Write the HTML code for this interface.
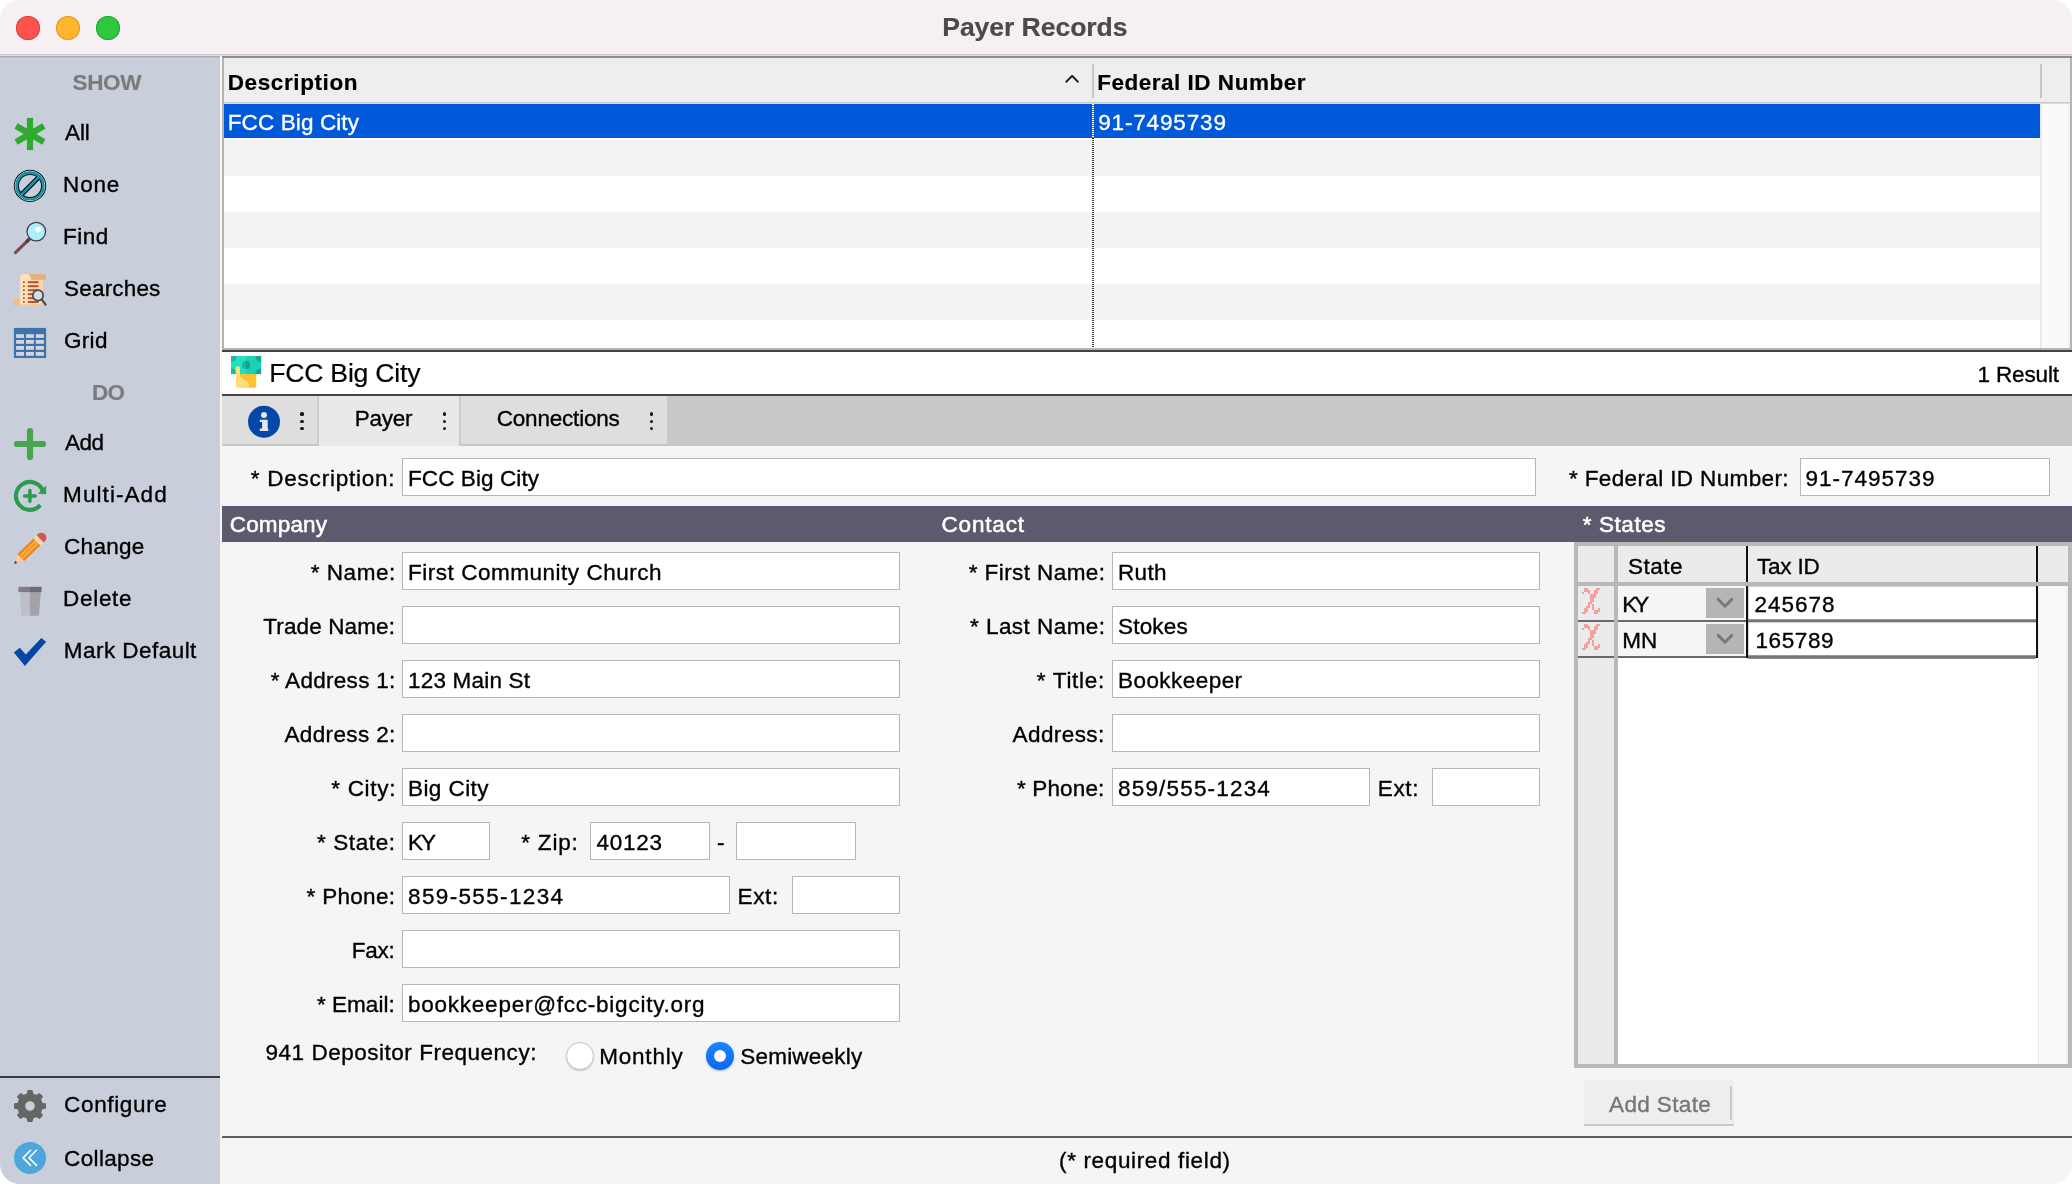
<!DOCTYPE html>
<html><head><meta charset="utf-8"><title>Payer Records</title><style>
html,body{margin:0;padding:0}
body{width:2072px;height:1184px;position:relative;overflow:hidden;background:#fff;font-family:"Liberation Sans",sans-serif}
.t{position:absolute;line-height:1;white-space:pre;font-family:"Liberation Sans",sans-serif}
#txt{position:absolute;left:0;top:0;width:2072px;height:1184px;will-change:transform}
.a{position:absolute}
</style></head><body>
<div class="a" id="win" style="left:0;top:0;width:2072px;height:1184px;border-radius:20px;overflow:hidden;background:#f5f5f5">
<div class="a" style="left:0px;top:0px;width:2072px;height:54px;background:#f6f0f5"></div>
<div class="a" style="left:0px;top:54px;width:2072px;height:1px;background:#cfc9ce"></div>
<div class="a" style="left:0px;top:55px;width:2072px;height:1px;background:#e6e0e5"></div>
<div class="a" style="left:16px;top:16px;width:24px;height:24px;border-radius:50%;background:#fe5450;box-shadow:inset 0 0 0 1px #e33e3a"></div>
<div class="a" style="left:56px;top:16px;width:24px;height:24px;border-radius:50%;background:#feb530;box-shadow:inset 0 0 0 1px #e09e22"></div>
<div class="a" style="left:96px;top:16px;width:24px;height:24px;border-radius:50%;background:#2fc640;box-shadow:inset 0 0 0 1px #1eaa2e"></div>
<div class="a" style="left:0px;top:56px;width:220px;height:1128px;background:#c9cfda"></div>
<div class="a" style="left:0px;top:56px;width:220px;height:1px;background:#a3abb7"></div>
<div class="a" style="left:0px;top:57px;width:220px;height:1px;background:#bcc3ce"></div>
<div class="a" style="left:220px;top:56px;width:2px;height:1128px;background:#f7f7f7"></div>
<div class="a" style="left:0px;top:1076px;width:220px;height:2px;background:#3b3b3b"></div>
<div class="a" style="left:222px;top:56px;width:1850px;height:294px;background:#b4b4b4"></div>
<div class="a" style="left:222px;top:56px;width:1850px;height:2px;background:#8e8e8e"></div>
<div class="a" style="left:224px;top:58px;width:1846px;height:44px;background:#eeeeee"></div>
<div class="a" style="left:224px;top:102px;width:1846px;height:1px;background:#c9c9c9"></div>
<div class="a" style="left:224px;top:103px;width:1846px;height:1px;background:#dcdcdc"></div>
<div class="a" style="left:224px;top:104px;width:1816px;height:244px;background:#fff"></div>
<div class="a" style="left:224px;top:140px;width:1816px;height:36px;background:#f1f2f2"></div>
<div class="a" style="left:224px;top:212px;width:1816px;height:36px;background:#f1f2f2"></div>
<div class="a" style="left:224px;top:284px;width:1816px;height:36px;background:#f1f2f2"></div>
<div class="a" style="left:224px;top:104px;width:1816px;height:34px;background:#0059d8"></div>
<div class="a" style="left:2040px;top:104px;width:30px;height:244px;background:#fafafa;box-shadow:inset 1.5px 0 0 #e6e6e6,inset -2px 0 0 #f1f1f1"></div>
<div class="a" style="left:1092px;top:64px;width:2px;height:34px;background:#c8c8c8"></div>
<div class="a" style="left:2040px;top:64px;width:2px;height:34px;background:#c8c8c8"></div>
<div class="a" style="left:1092.3px;top:104px;width:1.6px;height:244px;background:repeating-linear-gradient(to bottom,#3c3c3c 0,#3c3c3c 1px,transparent 1px,transparent 2px)"></div>
<div class="a" style="left:1092.3px;top:104px;width:1.6px;height:34px;background:repeating-linear-gradient(to bottom,#fff 0,#fff 1px,#7a6240 1px,#7a6240 2px)"></div>
<svg class="a" style="left:1062px;top:72px" width="20" height="16" viewBox="0 0 20 16"><path d="M4.4 9.7 L10.1 3.9 L15.8 9.7" fill="none" stroke="#111" stroke-width="1.9" stroke-linecap="round" stroke-linejoin="round"/></svg>
<div class="a" style="left:222px;top:350px;width:1850px;height:2px;background:#444"></div>
<div class="a" style="left:222px;top:352px;width:1850px;height:42px;background:#fff"></div>
<div class="a" style="left:222px;top:394px;width:1850px;height:2px;background:#444"></div>
<div class="a" style="left:222px;top:396px;width:1850px;height:50px;background:#c8c8c8"></div>
<div class="a" style="left:222px;top:396px;width:96.7px;height:50px;background:#dedede;box-shadow:inset -1.5px -2px 0 #c6c6c6"></div>
<div class="a" style="left:318.7px;top:396px;width:140.6px;height:50px;background:#e9e9e9"></div>
<div class="a" style="left:459.3px;top:396px;width:207.7px;height:50px;background:#dedede;box-shadow:inset 1.5px -2px 0 #c6c6c6;border-bottom-left-radius:3px"></div>
<div class="a" style="left:300.45px;top:412.45px;width:3.1px;height:3.1px;border-radius:50%;background:#161616"></div>
<div class="a" style="left:300.45px;top:419.95px;width:3.1px;height:3.1px;border-radius:50%;background:#161616"></div>
<div class="a" style="left:300.45px;top:427.25px;width:3.1px;height:3.1px;border-radius:50%;background:#161616"></div>
<div class="a" style="left:442.95px;top:412.45px;width:3.1px;height:3.1px;border-radius:50%;background:#161616"></div>
<div class="a" style="left:442.95px;top:419.95px;width:3.1px;height:3.1px;border-radius:50%;background:#161616"></div>
<div class="a" style="left:442.95px;top:427.25px;width:3.1px;height:3.1px;border-radius:50%;background:#161616"></div>
<div class="a" style="left:649.95px;top:412.45px;width:3.1px;height:3.1px;border-radius:50%;background:#161616"></div>
<div class="a" style="left:649.95px;top:419.95px;width:3.1px;height:3.1px;border-radius:50%;background:#161616"></div>
<div class="a" style="left:649.95px;top:427.25px;width:3.1px;height:3.1px;border-radius:50%;background:#161616"></div>
<div class="a" style="left:222px;top:446px;width:1850px;height:690px;background:#f5f5f5"></div>
<div class="a" style="left:222px;top:506px;width:1850px;height:36px;background:#5c5b6e"></div>
<div class="a" style="left:222px;top:1136px;width:1850px;height:2px;background:#5e5e5e"></div>
<div class="a" style="left:402px;top:458px;width:1134px;height:38px;background:#fff;box-sizing:border-box;border:1.5px solid #b6b6b6"></div>
<div class="a" style="left:1800px;top:458px;width:250px;height:38px;background:#fff;box-sizing:border-box;border:1.5px solid #b6b6b6"></div>
<div class="a" style="left:402px;top:552px;width:498px;height:38px;background:#fff;box-sizing:border-box;border:1.5px solid #b6b6b6"></div>
<div class="a" style="left:402px;top:606px;width:498px;height:38px;background:#fff;box-sizing:border-box;border:1.5px solid #b6b6b6"></div>
<div class="a" style="left:402px;top:660px;width:498px;height:38px;background:#fff;box-sizing:border-box;border:1.5px solid #b6b6b6"></div>
<div class="a" style="left:402px;top:714px;width:498px;height:38px;background:#fff;box-sizing:border-box;border:1.5px solid #b6b6b6"></div>
<div class="a" style="left:402px;top:768px;width:498px;height:38px;background:#fff;box-sizing:border-box;border:1.5px solid #b6b6b6"></div>
<div class="a" style="left:402px;top:822px;width:88px;height:38px;background:#fff;box-sizing:border-box;border:1.5px solid #b6b6b6"></div>
<div class="a" style="left:590px;top:822px;width:120px;height:38px;background:#fff;box-sizing:border-box;border:1.5px solid #b6b6b6"></div>
<div class="a" style="left:736px;top:822px;width:120px;height:38px;background:#fff;box-sizing:border-box;border:1.5px solid #b6b6b6"></div>
<div class="a" style="left:402px;top:876px;width:328px;height:38px;background:#fff;box-sizing:border-box;border:1.5px solid #b6b6b6"></div>
<div class="a" style="left:792px;top:876px;width:108px;height:38px;background:#fff;box-sizing:border-box;border:1.5px solid #b6b6b6"></div>
<div class="a" style="left:402px;top:930px;width:498px;height:38px;background:#fff;box-sizing:border-box;border:1.5px solid #b6b6b6"></div>
<div class="a" style="left:402px;top:984px;width:498px;height:38px;background:#fff;box-sizing:border-box;border:1.5px solid #b6b6b6"></div>
<div class="a" style="left:1112px;top:552px;width:428px;height:38px;background:#fff;box-sizing:border-box;border:1.5px solid #b6b6b6"></div>
<div class="a" style="left:1112px;top:606px;width:428px;height:38px;background:#fff;box-sizing:border-box;border:1.5px solid #b6b6b6"></div>
<div class="a" style="left:1112px;top:660px;width:428px;height:38px;background:#fff;box-sizing:border-box;border:1.5px solid #b6b6b6"></div>
<div class="a" style="left:1112px;top:714px;width:428px;height:38px;background:#fff;box-sizing:border-box;border:1.5px solid #b6b6b6"></div>
<div class="a" style="left:1112px;top:768px;width:258px;height:38px;background:#fff;box-sizing:border-box;border:1.5px solid #b6b6b6"></div>
<div class="a" style="left:1432px;top:768px;width:108px;height:38px;background:#fff;box-sizing:border-box;border:1.5px solid #b6b6b6"></div>
<div class="a" style="left:566px;top:1042px;width:28px;height:28px;border-radius:50%;background:#fff;box-sizing:border-box;border:1px solid #c4c4c4;box-shadow:0 1px 1.5px rgba(0,0,0,.18)"></div>
<div class="a" style="left:706px;top:1042px;width:28px;height:28px;border-radius:50%;background:linear-gradient(#1a86ff,#0a68ee);box-shadow:0 1px 2px rgba(0,60,160,.35)"></div>
<div class="a" style="left:713.8px;top:1049.8px;width:12.4px;height:12.4px;border-radius:50%;background:#fff"></div>
<div class="a" style="left:1574px;top:542px;width:498px;height:526px;background:#b9b9b9"></div>
<div class="a" style="left:1578px;top:546px;width:36px;height:36px;background:#ebebeb"></div>
<div class="a" style="left:1618px;top:546px;width:128px;height:36px;background:#ebebeb"></div>
<div class="a" style="left:1748px;top:546px;width:288px;height:36px;background:#ebebeb"></div>
<div class="a" style="left:2038px;top:546px;width:30px;height:36px;background:#ebebeb"></div>
<div class="a" style="left:1746px;top:546px;width:2px;height:36px;background:#111"></div>
<div class="a" style="left:2036px;top:546px;width:2px;height:36px;background:#111"></div>
<div class="a" style="left:1578px;top:586px;width:36px;height:478px;background:#ebebeb"></div>
<div class="a" style="left:1618px;top:586px;width:420px;height:478px;background:#fff"></div>
<div class="a" style="left:2038px;top:586px;width:30px;height:478px;background:#f9f9f9;box-shadow:inset 1px 0 0 #ececec,inset -2px 0 0 #f0f0f0"></div>
<div class="a" style="left:1578px;top:620px;width:36px;height:2px;background:#6a6a6a"></div>
<div class="a" style="left:1618px;top:586px;width:128px;height:34px;background:#f5f5f5"></div>
<div class="a" style="left:1618px;top:620px;width:128px;height:2px;background:#6a6a6a"></div>
<div class="a" style="left:1706px;top:588px;width:38px;height:30px;background:#b5b5b5"></div>
<svg class="a" style="left:1715px;top:596px" width="20" height="14" viewBox="0 0 20 14"><path d="M3.2 3.4 L10 10.2 L16.8 3.4" fill="none" stroke="#797979" stroke-width="2.9" stroke-linecap="round" stroke-linejoin="round"/></svg>
<div class="a" style="left:1748px;top:586px;width:288px;height:34px;background:#fff;box-shadow:inset 2px 2px 1px -1px #cfcfcf"></div>
<div class="a" style="left:1748px;top:618.5px;width:288px;height:4px;background:linear-gradient(#a8a8a8,#6e6e6e 45%,#6e6e6e 60%,#9a9a9a)"></div>
<svg class="a" style="left:1582px;top:588px" width="18" height="26" viewBox="0 0 18 26" shape-rendering="crispEdges"><g fill="#f4a19b"><rect x="2" y="0" width="2" height="2"/><rect x="4" y="0" width="2" height="2"/><rect x="14" y="0" width="2" height="2"/><rect x="16" y="0" width="2" height="2"/><rect x="2" y="2" width="2" height="2"/><rect x="4" y="2" width="2" height="2"/><rect x="6" y="2" width="2" height="2"/><rect x="12" y="2" width="2" height="2"/><rect x="14" y="2" width="2" height="2"/><rect x="0" y="4" width="2" height="2"/><rect x="6" y="4" width="2" height="2"/><rect x="12" y="4" width="2" height="2"/><rect x="14" y="4" width="2" height="2"/><rect x="8" y="6" width="2" height="2"/><rect x="10" y="6" width="2" height="2"/><rect x="12" y="6" width="2" height="2"/><rect x="8" y="8" width="2" height="2"/><rect x="10" y="8" width="2" height="2"/><rect x="12" y="8" width="2" height="2"/><rect x="8" y="10" width="2" height="2"/><rect x="10" y="10" width="2" height="2"/><rect x="8" y="12" width="2" height="2"/><rect x="10" y="12" width="2" height="2"/><rect x="6" y="14" width="2" height="2"/><rect x="8" y="14" width="2" height="2"/><rect x="6" y="16" width="2" height="2"/><rect x="10" y="16" width="2" height="2"/><rect x="4" y="18" width="2" height="2"/><rect x="6" y="18" width="2" height="2"/><rect x="10" y="18" width="2" height="2"/><rect x="2" y="20" width="2" height="2"/><rect x="4" y="20" width="2" height="2"/><rect x="10" y="20" width="2" height="2"/><rect x="16" y="20" width="2" height="2"/><rect x="2" y="22" width="2" height="2"/><rect x="4" y="22" width="2" height="2"/><rect x="12" y="22" width="2" height="2"/><rect x="14" y="22" width="2" height="2"/><rect x="16" y="22" width="2" height="2"/><rect x="0" y="24" width="2" height="2"/><rect x="2" y="24" width="2" height="2"/><rect x="12" y="24" width="2" height="2"/><rect x="14" y="24" width="2" height="2"/></g></svg>
<div class="a" style="left:1578px;top:656px;width:36px;height:2px;background:#6a6a6a"></div>
<div class="a" style="left:1618px;top:622px;width:128px;height:34px;background:#f5f5f5"></div>
<div class="a" style="left:1618px;top:656px;width:128px;height:2px;background:#6a6a6a"></div>
<div class="a" style="left:1706px;top:624px;width:38px;height:30px;background:#b5b5b5"></div>
<svg class="a" style="left:1715px;top:632px" width="20" height="14" viewBox="0 0 20 14"><path d="M3.2 3.4 L10 10.2 L16.8 3.4" fill="none" stroke="#797979" stroke-width="2.9" stroke-linecap="round" stroke-linejoin="round"/></svg>
<div class="a" style="left:1748px;top:622px;width:288px;height:34px;background:#fff;box-shadow:inset 2px 2px 1px -1px #cfcfcf"></div>
<div class="a" style="left:1748px;top:654.5px;width:288px;height:4px;background:linear-gradient(#a8a8a8,#6e6e6e 45%,#6e6e6e 60%,#9a9a9a)"></div>
<svg class="a" style="left:1582px;top:624px" width="18" height="26" viewBox="0 0 18 26" shape-rendering="crispEdges"><g fill="#f4a19b"><rect x="2" y="0" width="2" height="2"/><rect x="4" y="0" width="2" height="2"/><rect x="14" y="0" width="2" height="2"/><rect x="16" y="0" width="2" height="2"/><rect x="2" y="2" width="2" height="2"/><rect x="4" y="2" width="2" height="2"/><rect x="6" y="2" width="2" height="2"/><rect x="12" y="2" width="2" height="2"/><rect x="14" y="2" width="2" height="2"/><rect x="0" y="4" width="2" height="2"/><rect x="6" y="4" width="2" height="2"/><rect x="12" y="4" width="2" height="2"/><rect x="14" y="4" width="2" height="2"/><rect x="8" y="6" width="2" height="2"/><rect x="10" y="6" width="2" height="2"/><rect x="12" y="6" width="2" height="2"/><rect x="8" y="8" width="2" height="2"/><rect x="10" y="8" width="2" height="2"/><rect x="12" y="8" width="2" height="2"/><rect x="8" y="10" width="2" height="2"/><rect x="10" y="10" width="2" height="2"/><rect x="8" y="12" width="2" height="2"/><rect x="10" y="12" width="2" height="2"/><rect x="6" y="14" width="2" height="2"/><rect x="8" y="14" width="2" height="2"/><rect x="6" y="16" width="2" height="2"/><rect x="10" y="16" width="2" height="2"/><rect x="4" y="18" width="2" height="2"/><rect x="6" y="18" width="2" height="2"/><rect x="10" y="18" width="2" height="2"/><rect x="2" y="20" width="2" height="2"/><rect x="4" y="20" width="2" height="2"/><rect x="10" y="20" width="2" height="2"/><rect x="16" y="20" width="2" height="2"/><rect x="2" y="22" width="2" height="2"/><rect x="4" y="22" width="2" height="2"/><rect x="12" y="22" width="2" height="2"/><rect x="14" y="22" width="2" height="2"/><rect x="16" y="22" width="2" height="2"/><rect x="0" y="24" width="2" height="2"/><rect x="2" y="24" width="2" height="2"/><rect x="12" y="24" width="2" height="2"/><rect x="14" y="24" width="2" height="2"/></g></svg>
<div class="a" style="left:1746px;top:586px;width:2px;height:72px;background:#111"></div>
<div class="a" style="left:2036px;top:586px;width:2px;height:72px;background:#111"></div>
<div class="a" style="left:1584px;top:1080px;width:150px;height:46px;background:#eeeeee;box-shadow:inset 0 -2px 0 #c9c9c9"></div>
<div class="a" style="left:1730px;top:1086px;width:2px;height:34px;background:#c9c9c9"></div>
</div>
<svg class="a" style="left:0;top:0" width="222" height="1184" viewBox="0 0 222 1184">
<g fill="#2eab2e" transform="translate(30 134)">
<rect x="-3.1" y="-16.1" width="6.2" height="32.2" transform="rotate(0)"/>
<rect x="-3.1" y="-16.1" width="6.2" height="32.2" transform="rotate(60)"/>
<rect x="-3.1" y="-16.1" width="6.2" height="32.2" transform="rotate(-60)"/>
</g>
<g fill="none" stroke-linecap="butt"><circle cx="30" cy="185.9" r="13.6" stroke="#07171c" stroke-width="5.2"/><line x1="21" y1="194.9" x2="39" y2="176.9" stroke="#07171c" stroke-width="4.9"/><circle cx="30" cy="185.9" r="14.85" stroke="#a5eef3" stroke-width="1"/><circle cx="30" cy="185.9" r="13.2" stroke="#1f8fa3" stroke-width="2.4"/><line x1="20.6" y1="195.3" x2="39.4" y2="176.5" stroke="#1f8fa3" stroke-width="2.5"/></g>
<g><line x1="28.8" y1="239.6" x2="15.4" y2="252.7" stroke="#7a4a47" stroke-width="3.1" stroke-linecap="round"/><line x1="29.6" y1="238.8" x2="26.2" y2="242.1" stroke="#5d3a40" stroke-width="3.4"/><circle cx="36.3" cy="231.6" r="9.3" fill="#a9f0fb" stroke="#4a3a56" stroke-width="1.3"/><circle cx="38.2" cy="229.6" r="2.9" fill="#ffffff"/></g>
<g><path d="M20.2 276.5 Q20.2 274 23 274 L43 274 L43 306 L14 306 L14 301 Q14 298.6 16.5 298.6 L20.2 298.6 Z" fill="#ffe0ba"/><rect x="31" y="274" width="12" height="32" fill="#fdd5a3"/><path d="M26 274 L43.5 274 Q46.1 274 46.1 276.8 L46.1 279.8 L31 279.8 Q31 274 26 274 Z" fill="#e3af7d"/><path d="M14 301 Q14 298.6 16.5 298.6 L20.2 298.6 L20.2 302 Q20.2 306 17 306 L14 306 Z" fill="#f1bd8c"/><rect x="14" y="304.2" width="29" height="1.8" fill="#f1bd8c" opacity="0.6"/>
<circle cx="23.9" cy="282.2" r="1" fill="#a5522f"/><line x1="27.8" y1="282.2" x2="38.5" y2="282.2" stroke="#a5522f" stroke-width="1.9"/>
<circle cx="23.9" cy="286.2" r="1" fill="#a5522f"/><line x1="27.8" y1="286.2" x2="38.5" y2="286.2" stroke="#a5522f" stroke-width="1.9"/>
<circle cx="23.9" cy="290.2" r="1" fill="#a5522f"/><line x1="27.8" y1="290.2" x2="38.5" y2="290.2" stroke="#a5522f" stroke-width="1.9"/>
<circle cx="23.9" cy="294.2" r="1" fill="#a5522f"/><line x1="27.8" y1="294.2" x2="38.5" y2="294.2" stroke="#a5522f" stroke-width="1.9"/>
<circle cx="23.9" cy="298.2" r="1" fill="#a5522f"/><line x1="27.8" y1="298.2" x2="38.5" y2="298.2" stroke="#a5522f" stroke-width="1.9"/>
<circle cx="23.9" cy="302" r="1" fill="#a5522f"/><line x1="27.8" y1="302" x2="38.5" y2="302" stroke="#a5522f" stroke-width="1.9"/>
<line x1="41.6" y1="299.3" x2="45.6" y2="304.6" stroke="#474b55" stroke-width="2.2" stroke-linecap="round"/><circle cx="38" cy="295.4" r="5.2" fill="#d6dcee" stroke="#474b55" stroke-width="1.7"/></g>
<g><rect x="13.9" y="327.9" width="32.2" height="30.1" fill="#3f72a8"/>
<rect x="16.1" y="334.2" width="7.9" height="3.7" fill="#d3d6de"/>
<rect x="16.1" y="340" width="7.9" height="3.8" fill="#d3d6de"/>
<rect x="16.1" y="346" width="7.9" height="3.8" fill="#d3d6de"/>
<rect x="16.1" y="352" width="7.9" height="3.8" fill="#d3d6de"/>
<rect x="26" y="334.2" width="7.9" height="3.7" fill="#d3d6de"/>
<rect x="26" y="340" width="7.9" height="3.8" fill="#d3d6de"/>
<rect x="26" y="346" width="7.9" height="3.8" fill="#d3d6de"/>
<rect x="26" y="352" width="7.9" height="3.8" fill="#d3d6de"/>
<rect x="35.8" y="334.2" width="8.1" height="3.7" fill="#d3d6de"/>
<rect x="35.8" y="340" width="8.1" height="3.8" fill="#d3d6de"/>
<rect x="35.8" y="346" width="8.1" height="3.8" fill="#d3d6de"/>
<rect x="35.8" y="352" width="8.1" height="3.8" fill="#d3d6de"/>
</g>
<g stroke="#47a54f" stroke-width="6.2" stroke-linecap="round"><line x1="17" y1="444" x2="43" y2="444"/><line x1="30" y1="431" x2="30" y2="457"/></g>
<g fill="none" stroke="#2a9b4f"><path d="M40.30 505.20 A13.95 13.95 0 1 1 42.83 490.67" stroke-width="4.1" stroke-linecap="butt"/><line x1="24.6" y1="495.9" x2="35.2" y2="495.9" stroke-width="3.5" stroke-linecap="round"/><line x1="29.9" y1="490.6" x2="29.9" y2="501.2" stroke-width="3.5" stroke-linecap="round"/></g>
<path d="M45.85 486 L45.9 493.9 L38.3 493.6 Z" fill="#2a9b4f" stroke="#2a9b4f" stroke-width="0.5" stroke-linejoin="round"/>
<g transform="translate(14 564) rotate(-43.8)"><path d="M0 0 L10 -4.9 L10 4.9 Z" fill="#f9caa2"/><path d="M0 0 L3.2 -1.55 L3.2 1.55 Z" fill="#3a3a3a"/><rect x="9.5" y="-4.9" width="22.7" height="9.8" fill="#ef8424"/><rect x="9.5" y="-2" width="22.7" height="4" fill="#f29a2e"/><rect x="10.5" y="-2.3" width="21.7" height="0.9" fill="#f7c548"/><rect x="10.5" y="1.4" width="21.7" height="0.9" fill="#f7c548"/><rect x="32" y="-5" width="4.2" height="10" fill="#f4ecc2"/><rect x="33.1" y="-5" width="0.7" height="10" fill="#e2d596"/><rect x="34.6" y="-5" width="0.7" height="10" fill="#e2d596"/><path d="M36.2 -5 L38 -5 A5 5 0 0 1 38 5 L36.2 5 Z" fill="#d9544b"/></g>
<g><rect x="25.6" y="584.2" width="9" height="3" rx="1" fill="#d2cfd2"/><path d="M20.2 592 L30 592 L30 615.8 L21.3 615.8 Z" fill="#bfbdc5"/><path d="M30 592 L40.8 592 L39 615.8 L30 615.8 Z" fill="#a3a1aa"/><rect x="18.4" y="586.8" width="11.6" height="5.3" fill="#7f7d8a"/><rect x="30" y="586.8" width="11.6" height="5.3" fill="#6e6c79"/></g>
<polygon points="13.9,652.4 19.8,647.8 25.8,654.5 41.3,637.9 46.1,641.7 24.9,666.1" fill="#0447a8"/>
<path d="M27.22 1094.02 L27.94 1090.64 L32.06 1090.64 L32.78 1094.02 L36.51 1095.56 L39.40 1093.68 L42.32 1096.60 L40.44 1099.49 L41.98 1103.22 L45.36 1103.94 L45.36 1108.06 L41.98 1108.78 L40.44 1112.51 L42.32 1115.40 L39.40 1118.32 L36.51 1116.44 L32.78 1117.98 L32.06 1121.36 L27.94 1121.36 L27.22 1117.98 L23.49 1116.44 L20.60 1118.32 L17.68 1115.40 L19.56 1112.51 L18.02 1108.78 L14.64 1108.06 L14.64 1103.94 L18.02 1103.22 L19.56 1099.49 L17.68 1096.60 L20.60 1093.68 L23.49 1095.56 Z M35.40 1106.00 A5.4 5.4 0 1 0 24.60 1106.00 A5.4 5.4 0 1 0 35.40 1106.00 Z" fill="#666666" fill-rule="evenodd" stroke="#666666" stroke-width="1.2" stroke-linejoin="round"/>
<circle cx="30" cy="1157.9" r="16" fill="#4da6dc"/><g fill="none" stroke="#ffffff" stroke-width="1.5" stroke-linecap="round" stroke-linejoin="round"><path d="M30.6 1150.3 L23.1 1157.9 L30.6 1165.4"/><path d="M36.5 1150.3 L29 1157.9 L36.5 1165.4"/></g>
</svg>
<svg class="a" style="left:222px;top:350px" width="120" height="96" viewBox="222 350 120 96">
<g><path d="M240 374 L256.3 374 L256.3 386 Q256.3 387.8 254.5 387.8 L240 387.8 Z" fill="#ffc12e"/><rect x="231" y="356.1" width="15" height="18" fill="#20e0c4"/><rect x="246" y="356.1" width="15.1" height="18" fill="#18d1b6"/><path d="M231 356.1 L236.8 356.1 A5.8 5.8 0 0 1 231 361.9 Z" fill="#1bb69d"/><path d="M261.1 356.1 L255.3 356.1 A5.8 5.8 0 0 0 261.1 361.9 Z" fill="#17a58e"/><path d="M231 374.1 L231 368.3 A5.8 5.8 0 0 1 236.8 374.1 Z" fill="#1bb69d"/><path d="M261.1 374.1 L261.1 368.3 A5.8 5.8 0 0 0 255.3 374.1 Z" fill="#17a58e"/><path d="M246 360.8 A4.1 4.1 0 0 0 246 369 Z" fill="#1bb69d"/><path d="M246 360.8 A4.1 4.1 0 0 1 246 369 Z" fill="#17a08a"/><path d="M235.6 368.6 Q235.6 366.3 237.8 366.3 Q240 366.3 240 368.6 L240 375 Q241 378.5 245 380 Q249 381.5 249 385 L249 387.8 L238 387.8 Q236.2 387.8 236.1 386 Z" fill="#ffde7a"/></g>
<circle cx="264" cy="421.75" r="16" fill="#0447a8"/><g fill="#e6e6e6"><circle cx="264" cy="415" r="3"/><path d="M259.8 419.8 L267.7 419.8 L267.7 428.6 L268.3 428.6 L268.3 431 L259.8 431 L259.8 428.6 L262.1 428.6 L262.1 421.9 L259.8 421.9 Z"/></g>
</svg>
<div id="txt">
<span id="title" class="t" style="left:942.25px;top:14.19px;font-size:26.6px;font-weight:700;letter-spacing:-0.083px;color:#4b4a4b;-webkit-text-stroke:0.2px #4b4a4b">Payer Records</span>
<span id="show" class="t" style="left:72.50px;top:71.78px;font-size:22.5px;font-weight:700;letter-spacing:-0.333px;color:#7b7b7b;-webkit-text-stroke:0.2px #7b7b7b">SHOW</span>
<span id="sb_All" class="t" style="left:65.10px;top:122.17px;font-size:22.5px;font-weight:400;letter-spacing:-0.200px;color:#000;-webkit-text-stroke:0.35px #000">All</span>
<span id="sb_None" class="t" style="left:63.10px;top:174.17px;font-size:22.5px;font-weight:400;letter-spacing:0.800px;color:#000;-webkit-text-stroke:0.35px #000">None</span>
<span id="sb_Find" class="t" style="left:63.10px;top:226.17px;font-size:22.5px;font-weight:400;letter-spacing:0.467px;color:#000;-webkit-text-stroke:0.35px #000">Find</span>
<span id="sb_Searches" class="t" style="left:64.10px;top:278.18px;font-size:22.5px;font-weight:400;letter-spacing:0.171px;color:#000;-webkit-text-stroke:0.35px #000">Searches</span>
<span id="sb_Grid" class="t" style="left:64.10px;top:330.18px;font-size:22.5px;font-weight:400;letter-spacing:0.267px;color:#000;-webkit-text-stroke:0.35px #000">Grid</span>
<span id="do" class="t" style="left:91.90px;top:381.77px;font-size:22.5px;font-weight:700;letter-spacing:-0.600px;color:#7b7b7b;-webkit-text-stroke:0.2px #7b7b7b">DO</span>
<span id="sb_Add" class="t" style="left:65.10px;top:432.18px;font-size:22.5px;font-weight:400;letter-spacing:-0.500px;color:#000;-webkit-text-stroke:0.35px #000">Add</span>
<span id="sb_Multi-Add" class="t" style="left:63.10px;top:484.18px;font-size:22.5px;font-weight:400;letter-spacing:1.075px;color:#000;-webkit-text-stroke:0.35px #000">Multi-Add</span>
<span id="sb_Change" class="t" style="left:64.10px;top:536.18px;font-size:22.5px;font-weight:400;letter-spacing:0.280px;color:#000;-webkit-text-stroke:0.35px #000">Change</span>
<span id="sb_Delete" class="t" style="left:63.10px;top:588.18px;font-size:22.5px;font-weight:400;letter-spacing:0.680px;color:#000;-webkit-text-stroke:0.35px #000">Delete</span>
<span id="sb_Mark_Default" class="t" style="left:63.80px;top:640.18px;font-size:22.5px;font-weight:400;letter-spacing:0.455px;color:#000;-webkit-text-stroke:0.35px #000">Mark Default</span>
<span id="sb_Configure" class="t" style="left:64.10px;top:1094.28px;font-size:22.5px;font-weight:400;letter-spacing:0.650px;color:#000;-webkit-text-stroke:0.35px #000">Configure</span>
<span id="sb_Collapse" class="t" style="left:64.10px;top:1147.98px;font-size:22.5px;font-weight:400;letter-spacing:0.343px;color:#000;-webkit-text-stroke:0.35px #000">Collapse</span>
<span id="th1" class="t" style="left:227.75px;top:71.78px;font-size:22.5px;font-weight:700;letter-spacing:0.600px;color:#000;-webkit-text-stroke:0.2px #000">Description</span>
<span id="th2" class="t" style="left:1097.20px;top:71.58px;font-size:22.5px;font-weight:700;letter-spacing:0.513px;color:#000;-webkit-text-stroke:0.2px #000">Federal ID Number</span>
<span id="td1" class="t" style="left:227.75px;top:111.58px;font-size:22.5px;font-weight:400;letter-spacing:0.109px;color:#fff;-webkit-text-stroke:0.35px #fff">FCC Big City</span>
<span id="td2" class="t" style="left:1098.20px;top:112.27px;font-size:22.5px;font-weight:400;letter-spacing:0.844px;color:#fff;-webkit-text-stroke:0.35px #fff">91-7495739</span>
<span id="rt" class="t" style="left:269.20px;top:359.94px;font-size:26.6px;font-weight:400;letter-spacing:-0.218px;color:#000;-webkit-text-stroke:0.2px #000">FCC Big City</span>
<span id="res" class="t" style="left:1977.50px;top:364.32px;font-size:22.5px;font-weight:400;letter-spacing:-0.143px;color:#000;-webkit-text-stroke:0.35px #000">1 Result</span>
<span id="tab1" class="t" style="left:354.75px;top:407.57px;font-size:22.5px;font-weight:400;letter-spacing:-0.250px;color:#000;-webkit-text-stroke:0.35px #000">Payer</span>
<span id="tab2" class="t" style="left:496.75px;top:407.57px;font-size:22.5px;font-weight:400;letter-spacing:-0.200px;color:#000;-webkit-text-stroke:0.35px #000">Connections</span>
<span id="l_desc" class="t" style="left:250.75px;top:467.57px;font-size:22.5px;font-weight:400;letter-spacing:0.769px;color:#000;-webkit-text-stroke:0.35px #000">* Description:</span>
<span id="v_desc" class="t" style="left:408.00px;top:467.57px;font-size:22.5px;font-weight:400;letter-spacing:0.091px;color:#000;-webkit-text-stroke:0.35px #000">FCC Big City</span>
<span id="l_fed" class="t" style="left:1569.00px;top:468.07px;font-size:22.5px;font-weight:400;letter-spacing:0.368px;color:#000;-webkit-text-stroke:0.35px #000">* Federal ID Number:</span>
<span id="v_fed" class="t" style="left:1805.50px;top:467.57px;font-size:22.5px;font-weight:400;letter-spacing:1.000px;color:#000;-webkit-text-stroke:0.35px #000">91-7495739</span>
<span id="h_co" class="t" style="left:229.75px;top:513.83px;font-size:22.5px;font-weight:400;letter-spacing:0.167px;color:#fff;-webkit-text-stroke:0.55px #fff">Company</span>
<span id="h_ct" class="t" style="left:941.50px;top:513.83px;font-size:22.5px;font-weight:400;letter-spacing:0.833px;color:#fff;-webkit-text-stroke:0.55px #fff">Contact</span>
<span id="h_st" class="t" style="left:1582.75px;top:513.68px;font-size:22.5px;font-weight:400;letter-spacing:0.571px;color:#fff;-webkit-text-stroke:0.55px #fff">* States</span>
<span id="l_name" class="t" style="left:310.75px;top:562.08px;font-size:22.5px;font-weight:400;letter-spacing:0.533px;color:#000;-webkit-text-stroke:0.35px #000">* Name:</span>
<span id="l_trade" class="t" style="left:263.25px;top:616.08px;font-size:22.5px;font-weight:400;letter-spacing:0.120px;color:#000;-webkit-text-stroke:0.35px #000">Trade Name:</span>
<span id="l_a1" class="t" style="left:270.75px;top:670.08px;font-size:22.5px;font-weight:400;letter-spacing:0.291px;color:#000;-webkit-text-stroke:0.35px #000">* Address 1:</span>
<span id="l_a2" class="t" style="left:284.50px;top:724.08px;font-size:22.5px;font-weight:400;letter-spacing:0.356px;color:#000;-webkit-text-stroke:0.35px #000">Address 2:</span>
<span id="l_city" class="t" style="left:331.25px;top:778.08px;font-size:22.5px;font-weight:400;letter-spacing:0.700px;color:#000;-webkit-text-stroke:0.35px #000">* City:</span>
<span id="l_state" class="t" style="left:317.00px;top:832.08px;font-size:22.5px;font-weight:400;letter-spacing:0.600px;color:#000;-webkit-text-stroke:0.35px #000">* State:</span>
<span id="l_zip" class="t" style="left:521.25px;top:832.08px;font-size:22.5px;font-weight:400;letter-spacing:0.800px;color:#000;-webkit-text-stroke:0.35px #000">* Zip:</span>
<span id="l_dash" class="t" style="left:717.00px;top:832.08px;font-size:22.5px;font-weight:400;letter-spacing:0.000px;color:#000;-webkit-text-stroke:0.35px #000">-</span>
<span id="l_phone" class="t" style="left:306.50px;top:886.08px;font-size:22.5px;font-weight:400;letter-spacing:0.314px;color:#000;-webkit-text-stroke:0.35px #000">* Phone:</span>
<span id="l_ext" class="t" style="left:737.50px;top:886.08px;font-size:22.5px;font-weight:400;letter-spacing:0.667px;color:#000;-webkit-text-stroke:0.35px #000">Ext:</span>
<span id="l_fax" class="t" style="left:351.75px;top:940.08px;font-size:22.5px;font-weight:400;letter-spacing:-0.267px;color:#000;-webkit-text-stroke:0.35px #000">Fax:</span>
<span id="l_email" class="t" style="left:317.00px;top:994.08px;font-size:22.5px;font-weight:400;letter-spacing:0.029px;color:#000;-webkit-text-stroke:0.35px #000">* Email:</span>
<span id="l_941" class="t" style="left:265.50px;top:1041.58px;font-size:22.5px;font-weight:400;letter-spacing:0.522px;color:#000;-webkit-text-stroke:0.35px #000">941 Depositor Frequency:</span>
<span id="l_mon" class="t" style="left:599.20px;top:1045.98px;font-size:22.5px;font-weight:400;letter-spacing:0.800px;color:#000;-webkit-text-stroke:0.35px #000">Monthly</span>
<span id="l_semi" class="t" style="left:740.30px;top:1045.98px;font-size:22.5px;font-weight:400;letter-spacing:0.200px;color:#000;-webkit-text-stroke:0.35px #000">Semiweekly</span>
<span id="v_name" class="t" style="left:408.00px;top:562.08px;font-size:22.5px;font-weight:400;letter-spacing:0.524px;color:#000;-webkit-text-stroke:0.35px #000">First Community Church</span>
<span id="v_a1" class="t" style="left:408.00px;top:670.08px;font-size:22.5px;font-weight:400;letter-spacing:0.200px;color:#000;-webkit-text-stroke:0.35px #000">123 Main St</span>
<span id="v_city" class="t" style="left:408.00px;top:778.08px;font-size:22.5px;font-weight:400;letter-spacing:0.429px;color:#000;-webkit-text-stroke:0.35px #000">Big City</span>
<span id="v_state" class="t" style="left:408.00px;top:832.08px;font-size:22.5px;font-weight:400;letter-spacing:-2.000px;color:#000;-webkit-text-stroke:0.35px #000">KY</span>
<span id="v_zip" class="t" style="left:596.50px;top:832.08px;font-size:22.5px;font-weight:400;letter-spacing:0.750px;color:#000;-webkit-text-stroke:0.35px #000">40123</span>
<span id="v_phone" class="t" style="left:408.00px;top:886.08px;font-size:22.5px;font-weight:400;letter-spacing:1.364px;color:#000;-webkit-text-stroke:0.35px #000">859-555-1234</span>
<span id="v_email" class="t" style="left:408.00px;top:994.08px;font-size:22.5px;font-weight:400;letter-spacing:0.760px;color:#000;-webkit-text-stroke:0.35px #000">bookkeeper@fcc-bigcity.org</span>
<span id="c_fn" class="t" style="left:968.75px;top:562.08px;font-size:22.5px;font-weight:400;letter-spacing:0.417px;color:#000;-webkit-text-stroke:0.35px #000">* First Name:</span>
<span id="c_ln" class="t" style="left:970.00px;top:616.08px;font-size:22.5px;font-weight:400;letter-spacing:0.455px;color:#000;-webkit-text-stroke:0.35px #000">* Last Name:</span>
<span id="c_ti" class="t" style="left:1036.75px;top:670.08px;font-size:22.5px;font-weight:400;letter-spacing:0.714px;color:#000;-webkit-text-stroke:0.35px #000">* Title:</span>
<span id="c_ad" class="t" style="left:1012.50px;top:724.08px;font-size:22.5px;font-weight:400;letter-spacing:0.429px;color:#000;-webkit-text-stroke:0.35px #000">Address:</span>
<span id="c_ph" class="t" style="left:1017.00px;top:778.08px;font-size:22.5px;font-weight:400;letter-spacing:0.143px;color:#000;-webkit-text-stroke:0.35px #000">* Phone:</span>
<span id="c_ext" class="t" style="left:1377.75px;top:778.08px;font-size:22.5px;font-weight:400;letter-spacing:0.667px;color:#000;-webkit-text-stroke:0.35px #000">Ext:</span>
<span id="cv_fn" class="t" style="left:1118.00px;top:562.08px;font-size:22.5px;font-weight:400;letter-spacing:0.333px;color:#000;-webkit-text-stroke:0.35px #000">Ruth</span>
<span id="cv_ln" class="t" style="left:1118.00px;top:616.08px;font-size:22.5px;font-weight:400;letter-spacing:0.200px;color:#000;-webkit-text-stroke:0.35px #000">Stokes</span>
<span id="cv_ti" class="t" style="left:1118.00px;top:670.08px;font-size:22.5px;font-weight:400;letter-spacing:0.444px;color:#000;-webkit-text-stroke:0.35px #000">Bookkeeper</span>
<span id="cv_ph" class="t" style="left:1118.00px;top:778.08px;font-size:22.5px;font-weight:400;letter-spacing:1.182px;color:#000;-webkit-text-stroke:0.35px #000">859/555-1234</span>
<span id="g_h1" class="t" style="left:1628.10px;top:556.08px;font-size:22.5px;font-weight:400;letter-spacing:0.450px;color:#000;-webkit-text-stroke:0.35px #000">State</span>
<span id="g_h2" class="t" style="left:1757.00px;top:556.08px;font-size:22.5px;font-weight:400;letter-spacing:-0.200px;color:#000;-webkit-text-stroke:0.35px #000">Tax ID</span>
<span id="g_ky" class="t" style="left:1622.25px;top:593.98px;font-size:22.5px;font-weight:400;letter-spacing:-3.000px;color:#000;-webkit-text-stroke:0.35px #000">KY</span>
<span id="g_mn" class="t" style="left:1622.25px;top:630.08px;font-size:22.5px;font-weight:400;letter-spacing:0.000px;color:#000;-webkit-text-stroke:0.35px #000">MN</span>
<span id="g_t1" class="t" style="left:1754.60px;top:593.98px;font-size:22.5px;font-weight:400;letter-spacing:0.960px;color:#000;-webkit-text-stroke:0.35px #000">245678</span>
<span id="g_t2" class="t" style="left:1755.50px;top:630.08px;font-size:22.5px;font-weight:400;letter-spacing:0.600px;color:#000;-webkit-text-stroke:0.35px #000">165789</span>
<span id="addst" class="t" style="left:1609.00px;top:1093.58px;font-size:22.5px;font-weight:400;letter-spacing:0.375px;color:#767676;-webkit-text-stroke:0.35px #767676">Add State</span>
<span id="req" class="t" style="left:1059.00px;top:1150.08px;font-size:22.5px;font-weight:400;letter-spacing:0.647px;color:#000;-webkit-text-stroke:0.35px #000">(* required field)</span>
</div>
</body></html>
